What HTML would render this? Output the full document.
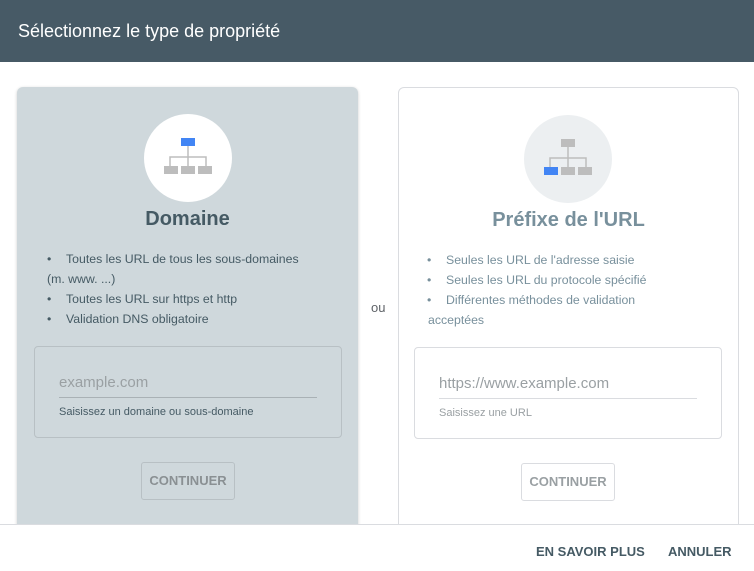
<!DOCTYPE html>
<html><head><meta charset="utf-8"><style>
*{box-sizing:border-box;margin:0;padding:0}
body{width:754px;height:571px;overflow:hidden;background:#fff;font-family:"Liberation Sans",sans-serif;position:relative}
.hdr{position:absolute;left:0;top:0;width:754px;height:62px;background:#475a66;color:#fff;font-size:18px;padding:21px 0 0 18px}
.card{position:absolute;top:87px;width:341px;height:460px;border-radius:6px}
.l{left:17px;background:#cfd8dc;box-shadow:0 1px 3px rgba(0,0,0,.2)}
.r{left:398px;border:1px solid #dadce0;background:#fff}
.circ{position:absolute;top:27px;left:127px;width:88px;height:88px;border-radius:50%}
.ttl{position:absolute;top:121px;left:0;width:100%;text-align:center;font-size:20px;font-weight:bold}
ul{position:absolute;top:163px;left:12px;right:14px;list-style:none;font-size:12.3px;line-height:20px}
li{position:relative;padding-left:37px}
li:before{content:"•";position:absolute;left:18px}
li.wrap:before{content:none}
.box{position:absolute;top:259px;left:17px;width:308px;height:92px;border:1px solid #b8c0c4;border-radius:4px}
.r .box{left:15px;border-color:#dadce0}
.ph{position:absolute;top:27px;left:24px;font-size:15px;color:#9aa0a3}
.ul{position:absolute;top:50px;left:24px;right:24px;border-top:1px solid #a9b1b5}
.r .ul{border-color:#dadce0}
.help{position:absolute;top:59px;left:24px;font-size:11px}
.btn{position:absolute;top:375px;width:94px;height:38px;border:1px solid #b8c0c4;border-radius:3px;font-size:13px;color:#8a9093;text-align:center;line-height:36px;font-weight:bold}
.r .btn{border-color:#dadce0;color:#9aa0a3}
.foot{position:absolute;left:0;top:524px;width:754px;height:47px;background:#fff;border-top:1px solid #dadce0}
.fb{position:absolute;top:19px;font-size:13px;font-weight:bold;color:#455a64}
</style></head><body>
<div class="hdr">Sélectionnez le type de propriété</div>
<div class="card l">
 <div class="circ" style="background:#fff"><svg width="88" height="88" viewBox="0 0 88 88"><rect x="37" y="24" width="14" height="8" fill="#4285f4"/><path d="M44 32v11M26 52v-9h36v9M44 43v9" stroke="#bdbdbd" stroke-width="1.5" fill="none"/><rect x="20" y="52" width="14" height="8" fill="#bdbdbd"/><rect x="37" y="52" width="14" height="8" fill="#bdbdbd"/><rect x="54" y="52" width="14" height="8" fill="#bdbdbd"/></svg></div>
 <div class="ttl" style="color:#455a64">Domaine</div>
 <ul style="color:#455a64;left:12px;top:162px"><li>Toutes les URL de tous les sous-domaines</li><li class="wrap" style="padding-left:18px">(m. www. ...)</li><li>Toutes les URL sur https et http</li><li>Validation DNS obligatoire</li></ul>
 <div class="box"><div class="ph">example.com</div><div class="ul"></div><div class="help" style="color:#455a64">Saisissez un domaine ou sous-domaine</div></div>
 <div class="btn" style="left:124px">CONTINUER</div>
</div>
<div style="position:absolute;left:371px;top:300px;font-size:13px;color:#5f6368">ou</div>
<div class="card r">
 <div class="circ" style="background:#eceff1;left:125px"><svg width="88" height="88" viewBox="0 0 88 88"><rect x="37" y="24" width="14" height="8" fill="#bdbdbd"/><path d="M44 32v11M26 52v-9h36v9M44 43v9" stroke="#bdbdbd" stroke-width="1.5" fill="none"/><rect x="20" y="52" width="14" height="8" fill="#4285f4"/><rect x="37" y="52" width="14" height="8" fill="#bdbdbd"/><rect x="54" y="52" width="14" height="8" fill="#bdbdbd"/></svg></div>
 <div class="ttl" style="color:#78909c">Préfixe de l'URL</div>
 <ul style="color:#78909c;left:10px;top:162px"><li>Seules les URL de l'adresse saisie</li><li>Seules les URL du protocole spécifié</li><li>Différentes méthodes de validation</li><li class="wrap" style="padding-left:19px">acceptées</li></ul>
 <div class="box"><div class="ph">https://www.example.com</div><div class="ul"></div><div class="help" style="color:#9aa0a3">Saisissez une URL</div></div>
 <div class="btn" style="left:122px">CONTINUER</div>
</div>
<div class="foot"><span class="fb" style="left:536px">EN SAVOIR PLUS</span><span class="fb" style="left:668px">ANNULER</span></div>
</body></html>
